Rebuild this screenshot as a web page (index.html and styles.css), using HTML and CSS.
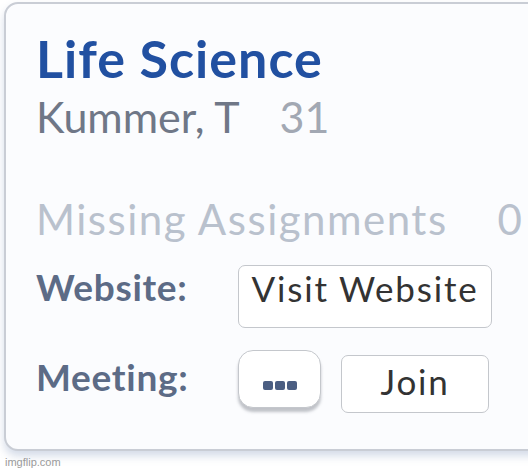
FILE: index.html
```html
<!DOCTYPE html>
<html>
<head>
<meta charset="utf-8">
<link rel="stylesheet" href="styles.css">
</head>
<body>
<div class="card">
  <h1 class="title">Life Science</h1>
  <div class="teacher"><span class="name">Kummer, T</span><span class="period">31</span></div>
  <div class="missing"><span>Missing Assignments</span><span class="count">0</span></div>
  <div class="row website">
    <span class="label">Website:</span>
    <button class="btn visit">Visit Website</button>
  </div>
  <div class="row meeting">
    <span class="label">Meeting:</span>
    <button class="btn more" aria-label="more"><span class="dot"></span><span class="dot"></span><span class="dot"></span></button>
    <button class="btn join">Join</button>
  </div>
</div>
<div class="watermark">imgflip.com</div>
</body>
</html>
```

FILE: styles.css
```css
html, body {
  margin: 0;
  padding: 0;
  background: #ffffff;
  overflow: hidden;
  width: 528px;
  height: 473px;
}
body {
  padding: 2px 0 0 4px;
  box-sizing: border-box;
  font-family: "Lato", "Noto Sans", sans-serif;
}
.card {
  width: 560px;
  height: 449px;
  box-sizing: border-box;
  background: #fbfcfe;
  border: 2px solid #c9cdd5;
  border-radius: 14px 0 0 14px;
  box-shadow: 0 5px 8px rgba(160, 175, 205, 0.45);
  padding: 26px 0 0 30px;
}
.title {
  margin: 0;
  font-size: 52px;
  font-weight: 700;
  color: #2150a1;
  line-height: 56px;
  letter-spacing: 1px;
}
.teacher {
  margin-top: 5.5px;
  font-size: 43px;
  line-height: 50px;
  color: #6f7787;
  letter-spacing: 0;
}
.period {
  margin-left: 40px;
  color: #a2a8b3;
}
.missing {
  margin-top: 53px;
  font-size: 42px;
  line-height: 48px;
  color: #b9c1cd;
  letter-spacing: 1.5px;
}
.missing .count {
  margin-left: 50px;
}
.row {
  display: flex;
  align-items: flex-start;
}
.website {
  margin-top: 22px;
}
.meeting {
  margin-top: 22px;
}
.label {
  font-size: 37px;
  line-height: 42px;
  font-weight: 700;
  color: #5c6b86;
  width: 202px;
  flex: none;
  letter-spacing: 0.7px;
}
.website .label {
  margin-top: 1px;
}
.meeting .label {
  margin-top: 6.7px;
}
.btn {
  font-family: "Lato", "Noto Sans", sans-serif;
  background: #ffffff;
  border: 1.5px solid #c4c7cc;
  border-radius: 7px;
  color: #333333;
  font-size: 35px;
  line-height: 42px;
  letter-spacing: 1.8px;
  box-sizing: border-box;
  flex: none;
}
.visit {
  width: 254px;
  height: 63px;
  padding: 1px 0 17px;
}
.more {
  width: 83px;
  height: 58px;
  border-radius: 15px;
  display: flex;
  align-items: flex-start;
  justify-content: center;
  gap: 2px;
  padding: 30px 0 0;
  box-shadow: 0 4px 3px rgba(120, 125, 135, 0.45);
}
.dot {
  width: 10px;
  height: 9px;
  border-radius: 2px;
  background: #4b5e82;
}
.join {
  width: 148px;
  height: 58px;
  margin-left: 20px;
  margin-top: 5px;
  padding: 4px 0 9px;
}
.watermark {
  margin: 5px 0 0 1px;
  font-family: "Liberation Sans", Arial, sans-serif;
  font-size: 11px;
  line-height: 13px;
  color: #9a9a9a;
}
```
